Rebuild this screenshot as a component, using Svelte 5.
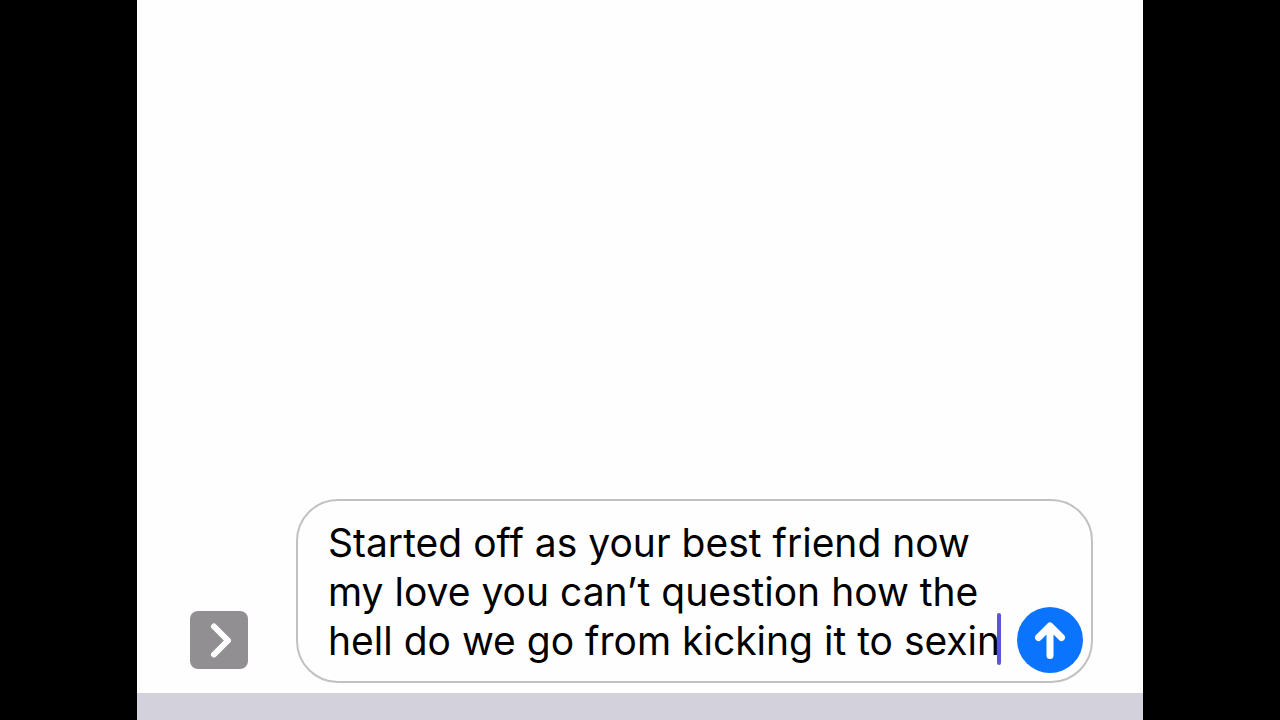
<script>
  let message = $state(
    'Started off as your best friend now my love you can’t question how the hell do we go from kicking it to sexin'
  );
  let typing = $state(false);
</script>

<main class="screen">
  <section class="messages" aria-label="Messages"></section>

  <form class="composer" onsubmit={(e) => e.preventDefault()}>
    <button class="expand" type="button" aria-label="Show apps">
      <svg viewBox="0 0 58 58" aria-hidden="true">
        <path d="M24 15.5 L38 29.5 L24 43.5" />
      </svg>
    </button>

    <div class="field">
      <textarea
        rows="3"
        aria-label="Message"
        spellcheck="false"
        bind:value={message}
        onfocus={() => (typing = true)}
      ></textarea>
      {#if !typing}
        <span class="caret"></span>
      {/if}
      <button class="send" type="submit" aria-label="Send">
        <svg viewBox="0 0 66 66" aria-hidden="true">
          <path d="M33 48.5 V19.5 M21.5 30.5 L33 19 L44.5 30.5" />
        </svg>
      </button>
    </div>
  </form>

  <div class="keyboard"></div>
</main>

<style>
  :global(body) {
    background: #000;
  }

  .screen {
    display: flex;
    flex-direction: column;
    max-width: 1006px;
    height: 100vh;
    margin: 0 auto;
    background: #fefefe;
  }

  .messages {
    flex: 1;
  }

  .composer {
    display: flex;
    align-items: flex-end;
    gap: 48px;
    padding: 0 50px 10px 53px;
  }

  button {
    flex: none;
    padding: 0;
    border: none;
    cursor: pointer;
  }

  svg {
    display: block;
    fill: none;
    stroke: #fff;
    stroke-linecap: round;
    stroke-linejoin: round;
  }

  .expand {
    width: 58px;
    height: 58px;
    margin-bottom: 14px;
    border-radius: 8px;
    background: #918f91;
  }

  .expand svg {
    stroke-width: 6;
  }

  .field {
    position: relative;
    display: flex;
    flex: 1;
    align-items: flex-end;
    gap: 8px;
    box-sizing: border-box;
    min-width: 0;
    padding: 17px 8px 8px 30px;
    border: 2px solid #c1c0c2;
    border-radius: 42px;
  }

  textarea {
    flex: 1;
    min-width: 0;
    height: 147px;
    margin-bottom: 8px;
    padding: 0;
    border: none;
    outline: none;
    overflow: hidden;
    resize: none;
    background: transparent;
    color: #000;
    caret-color: #5856d6;
    font-family: Inter, "Liberation Sans", sans-serif;
    font-size: 39px;
    line-height: 49px;
  }

  .caret {
    position: absolute;
    right: 90px;
    bottom: 16px;
    width: 4px;
    height: 52px;
    border-radius: 2px;
    background: #5a55e0;
  }

  .send {
    width: 66px;
    height: 66px;
    border-radius: 50%;
    background: #0b74fe;
  }

  .send svg {
    stroke-width: 7;
  }

  .keyboard {
    height: 27px;
    background: #d3d1dc;
  }
</style>
